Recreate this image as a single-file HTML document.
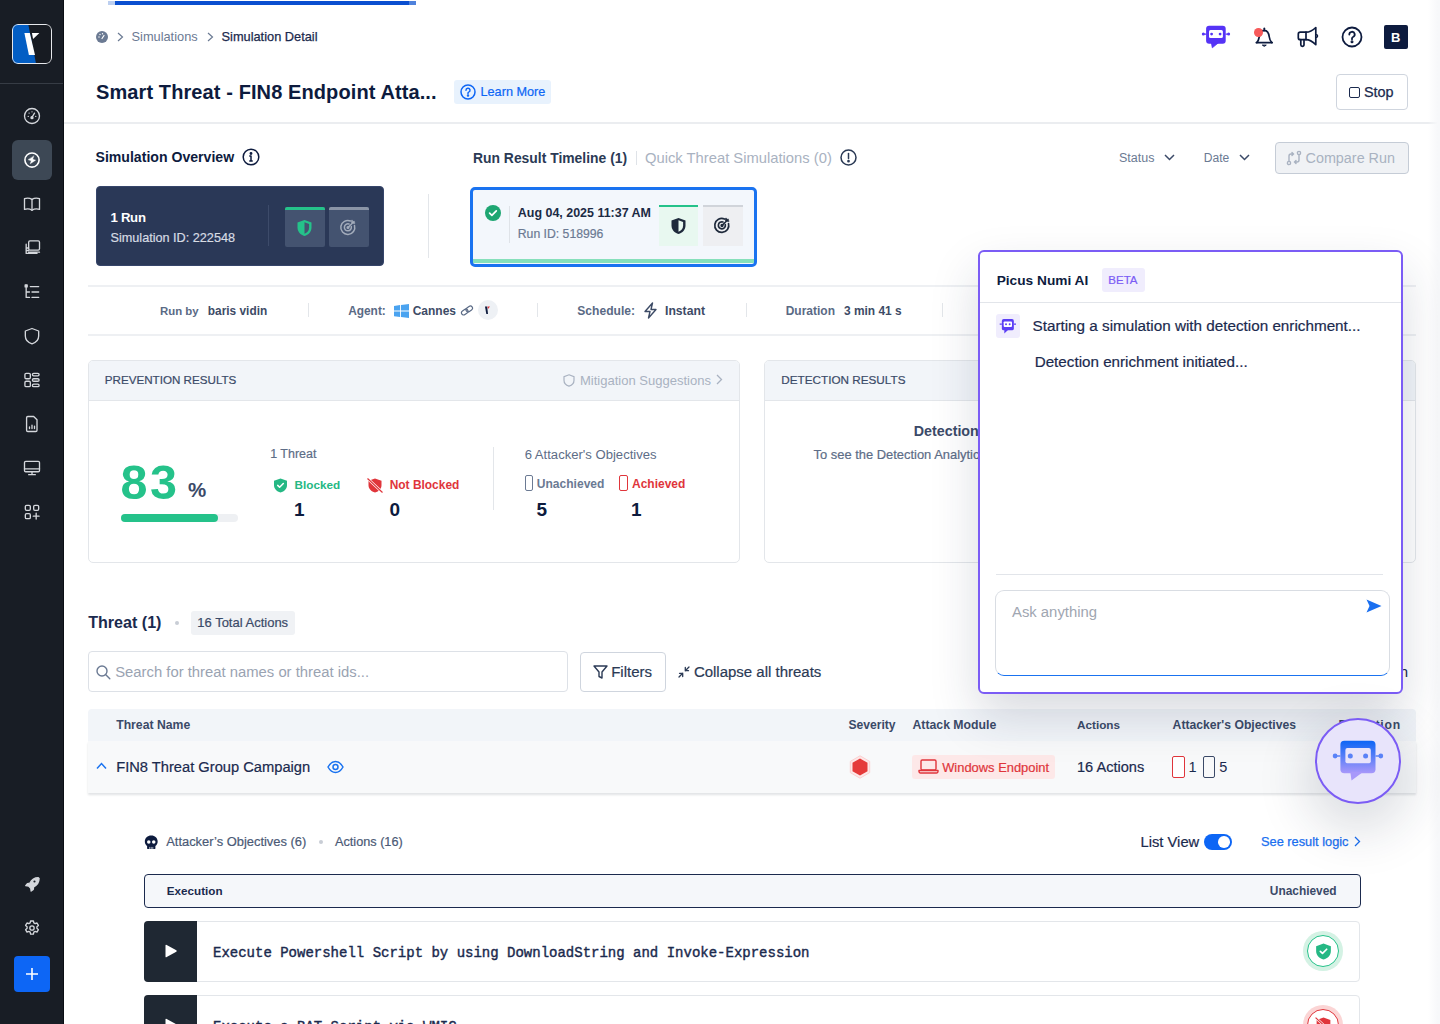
<!DOCTYPE html>
<html><head><meta charset="utf-8">
<style>
*{box-sizing:border-box;margin:0;padding:0}
html,body{width:1440px;height:1024px;overflow:hidden;background:#fff;font-family:"Liberation Sans",sans-serif;color:#1b2a44}
.a{position:absolute}
.t{position:absolute;white-space:nowrap;line-height:1}
.sbi{position:absolute;left:12px;width:40px;height:40px;border-radius:6px;display:flex;align-items:center;justify-content:center}
.sbi svg{width:20px;height:20px;fill:none;stroke:#d4d7dc;stroke-width:1.6;stroke-linecap:round;stroke-linejoin:round}
</style></head><body>
<div class="a" style="left:0;top:0;width:64px;height:1024px;background:#181d25"></div>
<div class="a" style="left:12px;top:24px;width:40px;height:40px;border-radius:6px;overflow:hidden;background:#171b22">
<svg width="40" height="40" viewBox="0 0 40 40" style="position:absolute;left:0;top:0">
<polygon points="0,0 16.2,0 24.1,40 0,40" fill="#035ec4"/>
<polygon points="12.4,9.1 17.8,9.1 23,31 16.9,31" fill="#fff"/>
<polygon points="19.9,9.1 27.4,9.1 21.1,15" fill="#fff"/>
</svg><div class="a" style="left:0;top:0;width:40px;height:40px;border:1.5px solid #e6e8ec;border-radius:6px"></div></div>
<div class="a" style="left:0px;top:83px;width:64px;height:1px;background:#363c45"></div>
<div class="a" style="left:63px;top:0px;width:1px;height:1024px;background:#0a0e14"></div>
<div class="sbi" style="top:96px"><svg viewBox="0 0 24 24"><circle cx="12" cy="12" r="9"/><path d="M12 13.5l3-5"/><circle cx="12" cy="14" r="1.2" fill="#d4d7dc"/><path d="M7.5 12.5h.01M8.5 8.5h.01M12 7h.01M16.5 12.5h.01"/></svg></div>
<div class="sbi" style="top:184px"><svg viewBox="0 0 24 24"><path d="M3 5.5c3-1 6-1 9 1 3-2 6-2 9-1v13c-3-1-6-1-9 1-3-2-6-2-9-1z"/><path d="M12 6.5v13"/></svg></div>
<div class="sbi" style="top:228px"><svg viewBox="0 0 24 24"><rect x="8" y="3.5" width="13" height="11" rx="1.5"/><path d="M5 7.5v11h13M5 12h3M5 15h3M8 17h13"/></svg></div>
<div class="sbi" style="top:272px"><svg viewBox="0 0 24 24"><path d="M10 5.5h10M12 12h8M12 18.5h8"/><path d="M5 4v14.5M5 12h4M5 18.5h4"/><rect x="3.8" y="3.5" width="2.4" height="2.4" fill="#d4d7dc"/></svg></div>
<div class="sbi" style="top:316px"><svg viewBox="0 0 24 24"><path d="M12 3l8 3v6c0 5-3.5 8-8 9.5C7.5 20 4 17 4 12V6z"/></svg></div>
<div class="sbi" style="top:360px"><svg viewBox="0 0 24 24"><rect x="3.5" y="4" width="6.5" height="6.5" rx="1.5"/><rect x="3.5" y="13.5" width="6.5" height="6.5" rx="1.5"/><rect x="12.5" y="4" width="8" height="3" rx="1.5"/><rect x="12.5" y="10.5" width="8" height="3" rx="1.5"/><rect x="12.5" y="17" width="8" height="3" rx="1.5"/></svg></div>
<div class="sbi" style="top:404px"><svg viewBox="0 0 24 24"><path d="M7 3h7l4 4v12.5a1.5 1.5 0 0 1-1.5 1.5h-9.5A1.5 1.5 0 0 1 5.5 19.5V4.5A1.5 1.5 0 0 1 7 3z"/><path d="M9 17.5v-2M12 17.5v-4M15 17.5v-3"/></svg></div>
<div class="sbi" style="top:448px"><svg viewBox="0 0 24 24"><rect x="3" y="4" width="18" height="12.5" rx="1.5"/><path d="M3 13h18M12 16.5v3.5M8 20h8"/></svg></div>
<div class="sbi" style="top:492px"><svg viewBox="0 0 24 24"><rect x="4" y="4" width="6" height="6" rx="1.5"/><rect x="14" y="4" width="6" height="6" rx="1.5"/><rect x="4" y="14" width="6" height="6" rx="1.5"/><path d="M17 13.5v7M13.5 17h7"/></svg></div>
<div class="sbi" style="top:908px"><svg viewBox="0 0 24 24"><path d="M10.3 3.6h3.4l.5 2.3 1.6.9 2.2-.8 1.7 2.9-1.8 1.6v1.9l1.8 1.6-1.7 2.9-2.2-.8-1.6.9-.5 2.3h-3.4l-.5-2.3-1.6-.9-2.2.8-1.7-2.9 1.8-1.6v-1.9L4.3 8.9 6 6l2.2.8 1.6-.9z"/><circle cx="12" cy="12" r="2.6"/></svg></div>
<div class="sbi" style="top:140px;background:#3d4855"><svg viewBox="0 0 24 24" style="stroke:#fff;stroke-width:1.9"><circle cx="12" cy="12" r="8.5"/><path d="M14.13 7.39 L12.92 11.12 L16.34 12.23 L9.87 16.61 L11.08 12.88 L7.66 11.77Z" fill="#fff" stroke-width=".5"/></svg></div>
<div class="sbi" style="top:864px"><svg viewBox="0 0 24 24" style="fill:#d4d7dc;stroke:#d4d7dc"><path d="M19.5 4.5c-4.5 0-8 2.5-10 6.5l-3 .5-2 2.5 3.5.5 2.5 2.5.5 3.5 2.5-2 .5-3c4-2 6.5-5.5 6.5-10z"/><circle cx="15" cy="9" r="1.3" fill="#181d25" stroke="none"/></svg></div>
<div class="a" style="left:14px;top:956px;width:36px;height:36px;border-radius:4px;background:#0d66f5;display:flex;align-items:center;justify-content:center"><svg width="14" height="14" viewBox="0 0 14 14"><path d="M7 1v12M1 7h12" stroke="#fff" stroke-width="1.6"/></svg></div>
<div class="a" style="left:108px;top:1px;width:308px;height:4px;background:#0a4fd0"></div>
<div class="a" style="left:108px;top:1px;width:7px;height:4px;background:#bccff0"></div>
<div class="a" style="left:409px;top:1px;width:7px;height:4px;background:#4f82dc"></div>
<svg class="a" style="left:96px;top:31px" width="12" height="12" viewBox="0 0 12 12"><circle cx="6" cy="6" r="6" fill="#6b7a93"/><path d="M6 7.5l2-3" stroke="#fff" stroke-width="1.2" stroke-linecap="round"/><circle cx="3" cy="6" r=".7" fill="#fff"/><circle cx="4" cy="3.5" r=".7" fill="#fff"/><circle cx="6.5" cy="2.7" r=".7" fill="#fff"/></svg>
<svg class="a" style="left:117px;top:32px" width="7" height="10" viewBox="0 0 7 10"><path d="M1 1l4.5 4-4.5 4" fill="none" stroke="#6b7a93" stroke-width="1.2"/></svg>
<div class="t" style="left:131.5px;top:31.0px;font-size:12.8px;color:#6b7a93;font-weight:400;font-family:'Liberation Sans',sans-serif;">Simulations</div>
<svg class="a" style="left:207px;top:32px" width="7" height="10" viewBox="0 0 7 10"><path d="M1 1l4.5 4-4.5 4" fill="none" stroke="#6b7a93" stroke-width="1.2"/></svg>
<div class="t" style="left:221.5px;top:31.0px;font-size:12.8px;color:#1b2a4e;font-weight:400;font-family:'Liberation Sans',sans-serif;-webkit-text-stroke:0.25px #1b2a4e;">Simulation Detail</div>
<svg class="a" style="left:1200px;top:24px" width="32" height="26" viewBox="0 0 32 26">
<rect x="6.1" y="1.8" width="19.6" height="18" rx="3" fill="#5533f6"/>
<path d="M11.4 19l.9 4.8 5.9-4.8z" fill="#5533f6" stroke="#5533f6" stroke-width=".8" stroke-linejoin="round"/>
<rect x="9" y="6" width="13.9" height="8.1" rx="1.5" fill="#fff"/>
<circle cx="11.6" cy="10.1" r="1.4" fill="#5533f6"/><circle cx="20.1" cy="10.1" r="1.4" fill="#5533f6"/>
<path d="M3.3 10.1H6.5M25.5 10.1H28.6" stroke="#5533f6" stroke-width="1.4"/>
<circle cx="3.3" cy="10.1" r="1.5" fill="#5533f6"/><circle cx="28.6" cy="10.1" r="1.5" fill="#5533f6"/>
</svg>
<svg class="a" style="left:1253px;top:26px" width="22" height="22" viewBox="0 0 22 22" fill="none" stroke="#0d1b3e" stroke-width="1.7" stroke-linejoin="round" stroke-linecap="round">
<path d="M3.3 16.6H19.2"/><path d="M3.8 16.6C5.2 15 5.8 13.5 6.2 11 6.8 6.8 8.5 4.6 11.3 4.4 14.1 4.6 15.8 6.8 16.3 11 16.6 13.5 17.3 15 18.8 16.6"/><path d="M11.3 4.4V2.3"/>
<path d="M9.6 19.4Q11.3 21.2 13 19.4z" fill="#0d1b3e" stroke-width="1"/>
</svg>
<div class="a" style="left:1254.2px;top:28.1px;width:8.8px;height:8.8px;background:#f75a5a;border-radius:50%"></div>
<svg class="a" style="left:1297px;top:26px" width="22" height="22" viewBox="0 0 22 22" fill="none" stroke="#0d1b3e" stroke-width="1.7" stroke-linejoin="round" stroke-linecap="round">
<path d="M9 6.2H3.3a2 2 0 0 0-2 2v3.5a2 2 0 0 0 2 2H9C13 13.7 15.5 15.5 18.8 18.7V1.5C15.5 4.7 13 6.2 9 6.2z"/><path d="M9 6.2v7.5"/><path d="M3.8 13.7v5a1.6 1.6 0 0 0 3.2 0v-5"/><path d="M19.6 8.6a1.5 1.5 0 0 1 0 2.8" stroke-width="1.4"/>
</svg>
<svg class="a" style="left:1341px;top:26px" width="22" height="22" viewBox="0 0 22 22" fill="none" stroke="#0d1b3e" stroke-width="1.8">
<circle cx="11" cy="11" r="9.5"/><path d="M8.3 8.5a2.7 2.7 0 1 1 3.7 2.5c-.7.3-1 .8-1 1.5v.8" stroke-linecap="round"/><circle cx="11" cy="15.8" r=".6" fill="#0d1b3e"/>
</svg>
<div class="a" style="left:1384px;top:25px;width:24px;height:24px;background:#0d1b3e;border-radius:2px"></div>
<div class="t" style="left:1391.0px;top:31.0px;font-size:13px;color:#fff;font-weight:700;font-family:'Liberation Sans',sans-serif;">B</div>
<div class="t" style="left:96.0px;top:82.0px;font-size:20px;color:#0d1b3e;font-weight:700;font-family:'Liberation Sans',sans-serif;letter-spacing:0.1px;">Smart Threat - FIN8 Endpoint Atta...</div>
<div class="a" style="left:454px;top:80px;width:97px;height:24px;background:#e8f2fd;border-radius:3px"></div>
<svg class="a" style="left:460px;top:84px" width="16" height="16" viewBox="0 0 16 16" fill="none" stroke="#0d66f5" stroke-width="1.5"><circle cx="8" cy="8" r="7"/><path d="M6 6.2a2 2 0 1 1 2.7 1.9c-.5.2-.7.5-.7 1v.5" stroke-linecap="round"/><circle cx="8" cy="11.6" r=".5" fill="#0d66f5"/></svg>
<div class="t" style="left:480.5px;top:86.0px;font-size:12.7px;color:#0d66f5;font-weight:400;font-family:'Liberation Sans',sans-serif;-webkit-text-stroke:0.2px #0d66f5;">Learn More</div>
<div class="a" style="left:1336px;top:74px;width:72px;height:36px;border:1px solid #cfd5de;border-radius:4px;background:#fff"></div>
<div class="a" style="left:1349px;top:87px;width:11px;height:11px;border:1.4px solid #1b2a4e;border-radius:2px"></div>
<div class="t" style="left:1364.0px;top:85.0px;font-size:14.4px;color:#1b2a4e;font-weight:400;font-family:'Liberation Sans',sans-serif;-webkit-text-stroke:0.25px #1b2a4e;">Stop</div>
<div class="a" style="left:64px;top:122px;width:1376px;height:2px;background:#ebedf0"></div>
<div class="t" style="left:95.5px;top:150.0px;font-size:14.1px;color:#0d1b3e;font-weight:700;font-family:'Liberation Sans',sans-serif;">Simulation Overview</div>
<svg class="a" style="left:242px;top:148px" width="18" height="18" viewBox="0 0 18 18" fill="none" stroke="#0d1b3e" stroke-width="1.5"><circle cx="9" cy="9" r="7.8"/><path d="M9 8v5M7.8 13h2.4M7.8 8H9" stroke-linecap="round"/><circle cx="9" cy="5.5" r=".7" fill="#0d1b3e"/></svg>
<div class="a" style="left:95.5px;top:185.5px;width:288.5px;height:80px;background:#2a3857;border:1px solid #36456a;border-radius:4px"></div>
<div class="t" style="left:110.5px;top:211.0px;font-size:13.2px;color:#fff;font-weight:700;font-family:'Liberation Sans',sans-serif;letter-spacing:-0.3px;">1 Run</div>
<div class="t" style="left:110.5px;top:232.0px;font-size:12.66px;color:#d7dce4;font-weight:400;font-family:'Liberation Sans',sans-serif;-webkit-text-stroke:0.2px #d7dce4;">Simulation ID: 222548</div>
<div class="a" style="left:268px;top:204.5px;width:1px;height:41.5px;background:#3d4b6a"></div>
<div class="a" style="left:284.5px;top:207px;width:40px;height:40px;background:#445370;border-radius:2px"></div>
<div class="a" style="left:284.5px;top:207px;width:40px;height:3px;background:#25c28a;border-radius:2px 2px 0 0"></div>
<svg class="a" style="left:296px;top:219px" width="17" height="18" viewBox="0 0 17 18"><path d="M8.5 1l7 2.6v5c0 4.5-3 7.3-7 8.4-4-1.1-7-3.9-7-8.4v-5z" fill="#25c28a"/><path d="M8.5 1v16" stroke="#445370" stroke-width="0"/><path d="M8.5 3.2l0 11.6c2.6-1 4.6-3.1 4.6-6.3V5z" fill="#445370"/></svg>
<div class="a" style="left:329px;top:207px;width:40px;height:40px;background:#445370;border-radius:2px"></div>
<div class="a" style="left:329px;top:207px;width:40px;height:3px;background:#8a94a6;border-radius:2px 2px 0 0"></div>
<svg class="a" style="left:339px;top:218px" width="19" height="19" viewBox="0 0 19 19" fill="none" stroke="#a3acbb" stroke-width="1.5" stroke-linecap="round"><path d="M15.5 7.5A7 7 0 1 1 11.5 3"/><path d="M12.3 8.6A3.5 3.5 0 1 1 10 6"/><circle cx="9" cy="9.5" r=".8" fill="#a3acbb"/><path d="M9 9.5l6-6M13 2.5v2.5h2.5"/></svg>
<div class="a" style="left:428px;top:193.5px;width:1px;height:64.5px;background:#e3e6ea"></div>
<div class="t" style="left:473.0px;top:152.0px;font-size:13.9px;color:#2b3a55;font-weight:700;font-family:'Liberation Sans',sans-serif;">Run Result Timeline (1)</div>
<div class="a" style="left:635.5px;top:151px;width:1px;height:14px;background:#dfe3e8"></div>
<div class="t" style="left:645.0px;top:151.0px;font-size:14.78px;color:#a9b2c1;font-weight:400;font-family:'Liberation Sans',sans-serif;">Quick Threat Simulations (0)</div>
<svg class="a" style="left:840px;top:149px" width="17" height="17" viewBox="0 0 17 17" fill="none" stroke="#2b3a55" stroke-width="1.5"><circle cx="8.5" cy="8.5" r="7.5"/><path d="M8.5 4.5v5" stroke-linecap="round"/><circle cx="8.5" cy="12.2" r=".6" fill="#2b3a55"/></svg>
<div class="a" style="left:469.5px;top:187px;width:287.5px;height:79.5px;background:#f3f7fc;border:3px solid #1a73f0;border-radius:5px;overflow:hidden"></div>
<div class="a" style="left:472.5px;top:258.8px;width:281.5px;height:4.7px;background:#86e0bb"></div>
<svg class="a" style="left:484.5px;top:205.4px" width="16" height="16" viewBox="0 0 16 16"><circle cx="8" cy="8" r="8" fill="#1ea672"/><path d="M4.6 8.2l2.3 2.2 4.4-4.6" fill="none" stroke="#fff" stroke-width="1.7" stroke-linecap="round" stroke-linejoin="round"/></svg>
<div class="a" style="left:508.5px;top:205.5px;width:1px;height:37.5px;background:#dfe3e8"></div>
<div class="t" style="left:517.8px;top:207.0px;font-size:12.46px;color:#1b2a44;font-weight:700;font-family:'Liberation Sans',sans-serif;">Aug 04, 2025 11:37 AM</div>
<div class="t" style="left:517.8px;top:228.0px;font-size:12.22px;color:#6b7a93;font-weight:400;font-family:'Liberation Sans',sans-serif;-webkit-text-stroke:0.2px #6b7a93;">Run ID: 518996</div>
<div class="a" style="left:658.5px;top:205px;width:39.5px;height:40.5px;background:#e8f8f0"></div>
<div class="a" style="left:658.5px;top:205px;width:39.5px;height:2px;background:#25c28a"></div>
<svg class="a" style="left:669.5px;top:217px" width="17" height="18" viewBox="0 0 17 18"><path d="M8.5 1l7 2.6v5c0 4.5-3 7.3-7 8.4-4-1.1-7-3.9-7-8.4v-5z" fill="#1f2a3c"/><path d="M8.5 3.2l0 11.6c2.6-1 4.6-3.1 4.6-6.3V5z" fill="#e8f8f0"/></svg>
<div class="a" style="left:703px;top:205px;width:39.5px;height:40.5px;background:#eeeff2"></div>
<div class="a" style="left:703px;top:205px;width:39.5px;height:2px;background:#d0d4da"></div>
<svg class="a" style="left:712.5px;top:216px" width="19" height="19" viewBox="0 0 19 19" fill="none" stroke="#1f2a3c" stroke-width="1.7" stroke-linecap="round"><path d="M15.5 7.5A7 7 0 1 1 11.5 3"/><path d="M12.3 8.6A3.5 3.5 0 1 1 10 6"/><circle cx="9" cy="9.5" r=".8" fill="#1f2a3c"/><path d="M9 9.5l6-6M13 2.5v2.5h2.5"/></svg>
<div class="t" style="left:1119.0px;top:152.0px;font-size:12.5px;color:#6b7a93;font-weight:400;font-family:'Liberation Sans',sans-serif;">Status</div>
<svg class="a" style="left:1164px;top:154px" width="11" height="7" viewBox="0 0 11 7"><path d="M1 1l4.5 4.5L10 1" fill="none" stroke="#3b4a68" stroke-width="1.5"/></svg>
<div class="t" style="left:1203.8px;top:152.0px;font-size:12.07px;color:#6b7a93;font-weight:400;font-family:'Liberation Sans',sans-serif;">Date</div>
<svg class="a" style="left:1239px;top:154px" width="11" height="7" viewBox="0 0 11 7"><path d="M1 1l4.5 4.5L10 1" fill="none" stroke="#3b4a68" stroke-width="1.5"/></svg>
<div class="a" style="left:1274.5px;top:142px;width:134px;height:31.5px;background:#f0f2f5;border:1px solid #c5ccd6;border-radius:4px"></div>
<svg class="a" style="left:1286px;top:150px" width="16" height="16" viewBox="0 0 16 16" fill="none" stroke="#a9b2c1" stroke-width="1.4" stroke-linecap="round"><circle cx="3" cy="13" r="1.6"/><circle cx="13" cy="3" r="1.6"/><path d="M3 11.4V6a2 2 0 0 1 2-2h2.5M6 2.5L7.5 4 6 5.5M13 4.6V10a2 2 0 0 1-2 2H8.5M10 10.5L8.5 12l1.5 1.5"/></svg>
<div class="t" style="left:1305.5px;top:151.0px;font-size:14.38px;color:#a9b2c1;font-weight:400;font-family:'Liberation Sans',sans-serif;">Compare Run</div>
<div class="a" style="left:88px;top:285px;width:1328px;height:2px;background:#eef0f3"></div>
<div class="a" style="left:88px;top:334px;width:1328px;height:2px;background:#eef0f3"></div>
<div class="t" style="left:160.0px;top:306.0px;font-size:11.4px;color:#5a6a85;font-weight:700;font-family:'Liberation Sans',sans-serif;">Run by</div>
<div class="t" style="left:207.8px;top:306.0px;font-size:11.88px;color:#3d4b66;font-weight:700;font-family:'Liberation Sans',sans-serif;">baris vidin</div>
<div class="a" style="left:307.5px;top:303px;width:1px;height:14px;background:#e3e6ea"></div>
<div class="t" style="left:348.2px;top:306.0px;font-size:11.88px;color:#5a6a85;font-weight:700;font-family:'Liberation Sans',sans-serif;">Agent:</div>
<svg class="a" style="left:394px;top:303.5px" width="15" height="14" viewBox="0 0 15 14" fill="#4aa3f0"><path d="M0 1.9L6.1 1v5.6H0zM7 .9L15 0v6.6H7zM0 7.5h6.1V13L0 12.2zM7 7.5h8V14l-8-1.1z"/></svg>
<div class="t" style="left:412.7px;top:305.0px;font-size:11.99px;color:#3d4b66;font-weight:700;font-family:'Liberation Sans',sans-serif;">Cannes</div>
<svg class="a" style="left:460px;top:304px" width="14" height="13" viewBox="0 0 14 13" fill="none" stroke="#5a6a85" stroke-width="1.2"><g transform="rotate(-35 7 6.5)"><rect x="0.8" y="4.3" width="7" height="4.4" rx="2.2"/><rect x="6.2" y="4.3" width="7" height="4.4" rx="2.2"/></g></svg>
<div class="a" style="left:477.5px;top:300px;width:20px;height:20px;background:#eef1f5;border-radius:50%"></div>
<svg class="a" style="left:482px;top:305px" width="10" height="10" viewBox="0 0 10 10"><path d="M3 1.5h2.2l.8 7.5H4.3z" fill="#0d1b3e"/><path d="M5.5 1.5h2.5l-2 2.5z" fill="#e0353b"/></svg>
<div class="a" style="left:536.5px;top:303px;width:1px;height:14px;background:#e3e6ea"></div>
<div class="t" style="left:577.3px;top:305.0px;font-size:12.08px;color:#5a6a85;font-weight:700;font-family:'Liberation Sans',sans-serif;">Schedule:</div>
<svg class="a" style="left:643px;top:302px" width="15" height="17" viewBox="0 0 15 17" fill="none" stroke="#3d4b66" stroke-width="1.4" stroke-linejoin="round"><path d="M9.5 1L2 9.5h5L5.5 16 13 7.5H8z"/></svg>
<div class="t" style="left:665.0px;top:305.0px;font-size:12.2px;color:#3d4b66;font-weight:700;font-family:'Liberation Sans',sans-serif;">Instant</div>
<div class="a" style="left:745.5px;top:303px;width:1px;height:14px;background:#e3e6ea"></div>
<div class="t" style="left:785.7px;top:305.0px;font-size:11.99px;color:#5a6a85;font-weight:700;font-family:'Liberation Sans',sans-serif;">Duration</div>
<div class="t" style="left:844.0px;top:306.0px;font-size:11.93px;color:#3d4b66;font-weight:700;font-family:'Liberation Sans',sans-serif;">3 min 41 s</div>
<div class="a" style="left:942px;top:303px;width:1px;height:14px;background:#e3e6ea"></div>
<div class="a" style="left:88px;top:359.5px;width:652px;height:203px;background:#fff;border:1px solid #e3e6ea;border-radius:5px;overflow:hidden"></div>
<div class="a" style="left:89px;top:360.5px;width:650px;height:40.5px;background:#f2f5f9;border-bottom:1px solid #e3e6ea;border-radius:4px 4px 0 0"></div>
<div class="t" style="left:104.8px;top:374.0px;font-size:11.64px;color:#3b4a68;font-weight:400;font-family:'Liberation Sans',sans-serif;-webkit-text-stroke:0.2px #3b4a68;">PREVENTION RESULTS</div>
<svg class="a" style="left:563px;top:374px" width="12" height="13" viewBox="0 0 12 13" fill="none" stroke="#a9b2c1" stroke-width="1.2"><path d="M6 .8l5 1.9v3.6c0 3.1-2.1 5.1-5 5.9-2.9-.8-5-2.8-5-5.9V2.7z"/></svg>
<div class="t" style="left:579.9px;top:374.0px;font-size:13.04px;color:#a9b2c1;font-weight:400;font-family:'Liberation Sans',sans-serif;">Mitigation Suggestions</div>
<svg class="a" style="left:716px;top:374px" width="7" height="11" viewBox="0 0 7 11"><path d="M1 1l4.5 4.5L1 10" fill="none" stroke="#a9b2c1" stroke-width="1.3"/></svg>
<div class="t" style="left:120.5px;top:458.0px;font-size:48.5px;color:#25c28a;font-weight:700;font-family:'Liberation Sans',sans-serif;letter-spacing:2.5px;">83</div>
<div class="t" style="left:188.0px;top:480.0px;font-size:20.5px;color:#3b4a68;font-weight:700;font-family:'Liberation Sans',sans-serif;">%</div>
<div class="a" style="left:120.5px;top:514px;width:117px;height:8px;background:#eef0f3;border-radius:4px"></div>
<div class="a" style="left:120.5px;top:514px;width:97.5px;height:8px;background:#25c28a;border-radius:4px"></div>
<div class="t" style="left:270.2px;top:448.0px;font-size:12.47px;color:#5d6d87;font-weight:400;font-family:'Liberation Sans',sans-serif;-webkit-text-stroke:0.2px #5d6d87;">1 Threat</div>
<svg class="a" style="left:272.5px;top:478px" width="15" height="15" viewBox="0 0 15 15"><path d="M7.5.5l6.5 2.3v4.3c0 4-2.7 6.4-6.5 7.4C3.7 13.5 1 11.1 1 7.1V2.8z" fill="#25b884"/><path d="M4.7 7.4l1.9 1.8 3.7-3.7" fill="none" stroke="#fff" stroke-width="1.5" stroke-linecap="round" stroke-linejoin="round"/></svg>
<div class="t" style="left:294.5px;top:479.0px;font-size:11.72px;color:#25b884;font-weight:700;font-family:'Liberation Sans',sans-serif;">Blocked</div>
<div class="t" style="left:294.0px;top:500.0px;font-size:19px;color:#0d1b3e;font-weight:700;font-family:'Liberation Sans',sans-serif;">1</div>
<svg class="a" style="left:366px;top:477px" width="18" height="17" viewBox="0 0 18 17"><path d="M9 1.5l6.5 2.3v4.3c0 4-2.7 6.4-6.5 7.4-3.8-1-6.5-3.4-6.5-7.4V3.8z" fill="#e0353b"/><path d="M1.5 1.5l15 14" stroke="#fff" stroke-width="2.4"/><path d="M1.5 1.5l15 14" stroke="#e0353b" stroke-width="1.2"/></svg>
<div class="t" style="left:389.7px;top:480.0px;font-size:11.95px;color:#e0353b;font-weight:700;font-family:'Liberation Sans',sans-serif;">Not Blocked</div>
<div class="t" style="left:389.5px;top:500.0px;font-size:19px;color:#0d1b3e;font-weight:700;font-family:'Liberation Sans',sans-serif;">0</div>
<div class="a" style="left:492.5px;top:447px;width:1px;height:63px;background:#e3e6ea"></div>
<div class="t" style="left:524.7px;top:448.0px;font-size:13.09px;color:#5d6d87;font-weight:400;font-family:'Liberation Sans',sans-serif;">6 Attacker's Objectives</div>
<div class="a" style="left:524.5px;top:474.7px;width:8px;height:16px;border:1.3px solid #6b7a93;border-radius:2px"></div>
<div class="t" style="left:536.8px;top:478.0px;font-size:12.06px;color:#6b7a93;font-weight:700;font-family:'Liberation Sans',sans-serif;">Unachieved</div>
<div class="t" style="left:536.4px;top:500.0px;font-size:19px;color:#0d1b3e;font-weight:700;font-family:'Liberation Sans',sans-serif;">5</div>
<div class="a" style="left:619px;top:474.7px;width:8.5px;height:16px;border:1.3px solid #e0353b;border-radius:2px"></div>
<div class="t" style="left:632.0px;top:478.0px;font-size:11.99px;color:#e0353b;font-weight:700;font-family:'Liberation Sans',sans-serif;">Achieved</div>
<div class="t" style="left:631.0px;top:500.0px;font-size:19px;color:#0d1b3e;font-weight:700;font-family:'Liberation Sans',sans-serif;">1</div>
<div class="a" style="left:764px;top:359.5px;width:652px;height:203px;background:#fff;border:1px solid #e3e6ea;border-radius:5px;overflow:hidden"></div>
<div class="a" style="left:765px;top:360.5px;width:650px;height:40px;background:#f2f5f9;border-bottom:1px solid #e3e6ea;border-radius:4px 4px 0 0"></div>
<div class="t" style="left:781.3px;top:374.0px;font-size:11.72px;color:#3b4a68;font-weight:400;font-family:'Liberation Sans',sans-serif;-webkit-text-stroke:0.2px #3b4a68;">DETECTION RESULTS</div>
<div class="t" style="left:913.8px;top:424.0px;font-size:14.27px;color:#3b4a68;font-weight:700;font-family:'Liberation Sans',sans-serif;">Detection Analytics</div>
<div class="t" style="left:813.5px;top:449.0px;font-size:12.93px;color:#5d6d87;font-weight:400;font-family:'Liberation Sans',sans-serif;-webkit-text-stroke:0.2px #5d6d87;">To see the Detection Analytics, please enable detection</div>
<div class="t" style="left:88.2px;top:614.0px;font-size:16.09px;color:#1b2a4e;font-weight:700;font-family:'Liberation Sans',sans-serif;">Threat (1)</div>
<div class="a" style="left:174.7px;top:620.5px;width:4.6px;height:4.6px;background:#c8cdd5;border-radius:50%"></div>
<div class="a" style="left:191.2px;top:610.8px;width:103.6px;height:24px;background:#f0f2f5;border-radius:3px"></div>
<div class="t" style="left:197.3px;top:616.0px;font-size:13.01px;color:#3b4a68;font-weight:400;font-family:'Liberation Sans',sans-serif;-webkit-text-stroke:0.2px #3b4a68;">16 Total Actions</div>
<div class="a" style="left:88px;top:651.2px;width:479.5px;height:41px;border:1px solid #dde1e7;border-radius:4px;background:#fff"></div>
<svg class="a" style="left:96px;top:665px" width="15" height="15" viewBox="0 0 15 15" fill="none" stroke="#6b7a93" stroke-width="1.4" stroke-linecap="round"><circle cx="6" cy="6" r="5"/><path d="M9.8 9.8l4 4"/></svg>
<div class="t" style="left:115.2px;top:665.0px;font-size:14.84px;color:#9aa3b2;font-weight:400;font-family:'Liberation Sans',sans-serif;">Search for threat names or threat ids...</div>
<div class="a" style="left:580px;top:652px;width:85.5px;height:39.5px;border:1px solid #cfd5de;border-radius:4px;background:#fff"></div>
<svg class="a" style="left:592.5px;top:665px" width="15" height="14" viewBox="0 0 15 14" fill="none" stroke="#2b3a55" stroke-width="1.4" stroke-linejoin="round"><path d="M1 1h13L9 7v6l-3-1.5V7z"/></svg>
<div class="t" style="left:611.2px;top:664.0px;font-size:15.03px;color:#2b3a55;font-weight:400;font-family:'Liberation Sans',sans-serif;-webkit-text-stroke:0.2px #2b3a55;">Filters</div>
<svg class="a" style="left:677.5px;top:666px" width="12" height="12" viewBox="0 0 12 12" fill="none" stroke="#2b3a55" stroke-width="1.3" stroke-linecap="round"><path d="M11 1L7.3 4.7M7.3 1.5v3.2h3.2M1 11l3.7-3.7M1.5 7.3h3.2v3.2"/></svg>
<div class="t" style="left:693.9px;top:664.0px;font-size:14.99px;color:#2b3a55;font-weight:400;font-family:'Liberation Sans',sans-serif;-webkit-text-stroke:0.2px #2b3a55;">Collapse all threats</div>
<div class="t" style="right:32px;top:664.3px;font-size:15px;color:#1b2a4e">Full Width Search</div>
<div class="a" style="left:88px;top:709px;width:1328px;height:31.5px;background:#f2f5f9;border-radius:4px 4px 0 0"></div>
<div class="t" style="left:116.2px;top:719.0px;font-size:12.22px;color:#3b4a68;font-weight:700;font-family:'Liberation Sans',sans-serif;">Threat Name</div>
<div class="t" style="left:848.4px;top:719.0px;font-size:12.13px;color:#3b4a68;font-weight:700;font-family:'Liberation Sans',sans-serif;">Severity</div>
<div class="t" style="left:912.5px;top:719.0px;font-size:12.25px;color:#3b4a68;font-weight:700;font-family:'Liberation Sans',sans-serif;">Attack Module</div>
<div class="t" style="left:1077.0px;top:719.0px;font-size:11.73px;color:#3b4a68;font-weight:700;font-family:'Liberation Sans',sans-serif;">Actions</div>
<div class="t" style="left:1172.6px;top:719.0px;font-size:12.2px;color:#3b4a68;font-weight:700;font-family:'Liberation Sans',sans-serif;">Attacker's Objectives</div>
<div class="t" style="left:1338.6px;top:719.0px;font-size:12.2px;color:#3b4a68;font-weight:700;font-family:'Liberation Sans',sans-serif;letter-spacing:0.75px;">Detection</div>
<div class="a" style="left:88px;top:740.5px;width:1328px;height:52.5px;background:#f8f9fa;box-shadow:0 2px 2px rgba(20,30,50,.12)"></div>
<svg class="a" style="left:96px;top:762px" width="11" height="8" viewBox="0 0 11 8"><path d="M1 6.5l4.5-5 4.5 5" fill="none" stroke="#1a73f0" stroke-width="1.5"/></svg>
<div class="t" style="left:116.2px;top:760.0px;font-size:14.69px;color:#1b2a4e;font-weight:400;font-family:'Liberation Sans',sans-serif;-webkit-text-stroke:0.2px #1b2a4e;">FIN8 Threat Group Campaign</div>
<svg class="a" style="left:326.5px;top:760px" width="17" height="14" viewBox="0 0 17 14" fill="none" stroke="#1a73f0" stroke-width="1.5"><path d="M1 7c2-3.6 4.5-5.5 7.5-5.5S14 3.4 16 7c-2 3.6-4.5 5.5-7.5 5.5S3 10.6 1 7z"/><circle cx="8.5" cy="7" r="2.5"/></svg>
<svg class="a" style="left:849px;top:754.5px" width="22" height="24" viewBox="0 0 22 24"><path d="M11 .8l9.7 5.6v11.2L11 23.2 1.3 17.6V6.4z" fill="#fde8e8" stroke="#fbd0d0" stroke-width="1"/><path d="M11 3.5l7.5 4.3v8.4L11 20.5l-7.5-4.3V7.8z" fill="#e53a3a"/></svg>
<div class="a" style="left:912.2px;top:754.8px;width:143px;height:24px;background:#fde8e8;border-radius:3px"></div>
<svg class="a" style="left:918px;top:759px" width="21" height="15" viewBox="0 0 21 15" fill="none" stroke="#e0353b" stroke-width="1.4" stroke-linejoin="round"><rect x="3" y="1" width="15" height="10" rx="1.2"/><path d="M1 11.5h19v1a1.5 1.5 0 0 1-1.5 1.5h-16A1.5 1.5 0 0 1 1 12.5z"/></svg>
<div class="t" style="left:942.2px;top:762.0px;font-size:12.92px;color:#e0353b;font-weight:400;font-family:'Liberation Sans',sans-serif;-webkit-text-stroke:0.2px #e0353b;">Windows Endpoint</div>
<div class="t" style="left:1077.0px;top:760.0px;font-size:14.59px;color:#1b2a4e;font-weight:400;font-family:'Liberation Sans',sans-serif;-webkit-text-stroke:0.2px #1b2a4e;">16 Actions</div>
<div class="a" style="left:1172px;top:756px;width:12.5px;height:22px;border:1.3px solid #e0353b;border-radius:2px;background:#fff"></div>
<div class="t" style="left:1188.6px;top:760.0px;font-size:14.5px;color:#1b2a4e;font-weight:400;font-family:'Liberation Sans',sans-serif;">1</div>
<div class="a" style="left:1202.5px;top:756px;width:12.5px;height:22px;border:1.3px solid #3b4a68;border-radius:2px"></div>
<div class="t" style="left:1219.2px;top:760.0px;font-size:14.5px;color:#1b2a4e;font-weight:400;font-family:'Liberation Sans',sans-serif;">5</div>
<svg class="a" style="left:143.5px;top:834.5px" width="14.5" height="14.5" viewBox="0 0 14 14"><path d="M7 .5C3.4.5.8 3 .8 6.3c0 1.9.9 3.4 2.2 4.3v2.2c0 .5.4.9.9.9h6.2c.5 0 .9-.4.9-.9v-2.2c1.3-.9 2.2-2.4 2.2-4.3C13.2 3 10.6.5 7 .5z" fill="#0d1b3e"/><circle cx="4.6" cy="6.8" r="1.7" fill="#fff"/><circle cx="9.4" cy="6.8" r="1.7" fill="#fff"/><path d="M5.5 11.5v2.2M7 11.5v2.2M8.5 11.5v2.2" stroke="#fff" stroke-width=".6"/></svg>
<div class="t" style="left:166.2px;top:836.0px;font-size:12.92px;color:#4b5a76;font-weight:400;font-family:'Liberation Sans',sans-serif;-webkit-text-stroke:0.2px #4b5a76;">Attacker’s Objectives (6)</div>
<div class="a" style="left:318.5px;top:839.6px;width:4.6px;height:4.6px;background:#c8cdd5;border-radius:50%"></div>
<div class="t" style="left:335.0px;top:836.0px;font-size:12.69px;color:#4b5a76;font-weight:400;font-family:'Liberation Sans',sans-serif;-webkit-text-stroke:0.2px #4b5a76;">Actions (16)</div>
<div class="t" style="left:1140.5px;top:835.0px;font-size:14.76px;color:#1b2a4e;font-weight:400;font-family:'Liberation Sans',sans-serif;-webkit-text-stroke:0.2px #1b2a4e;">List View</div>
<div class="a" style="left:1204px;top:834px;width:27.5px;height:16px;background:#0d66f5;border-radius:8px"></div>
<div class="a" style="left:1218.2px;top:836.2px;width:11.6px;height:11.6px;background:#fff;border-radius:50%"></div>
<div class="t" style="left:1261.0px;top:836.0px;font-size:12.8px;color:#1a6ff0;font-weight:400;font-family:'Liberation Sans',sans-serif;-webkit-text-stroke:0.25px #1a6ff0;">See result logic</div>
<svg class="a" style="left:1354px;top:836px" width="7" height="11" viewBox="0 0 7 11"><path d="M1 1l4.5 4.5L1 10" fill="none" stroke="#1a6ff0" stroke-width="1.3"/></svg>
<div class="a" style="left:143.7px;top:874.2px;width:1217px;height:33.5px;background:#f5f7fa;border:1.5px solid #1b2a4e;border-radius:4px"></div>
<div class="t" style="left:166.8px;top:885.0px;font-size:11.66px;color:#1b2a4e;font-weight:700;font-family:'Liberation Sans',sans-serif;">Execution</div>
<div class="t" style="left:1269.8px;top:886.0px;font-size:11.92px;color:#3b4a68;font-weight:700;font-family:'Liberation Sans',sans-serif;">Unachieved</div>
<div class="a" style="left:144.3px;top:920.5px;width:1216px;height:61px;background:#fff;border:1px solid #e3e6ea;border-radius:4px"></div>
<div class="a" style="left:144.3px;top:920.5px;width:52.3px;height:61px;background:#1f2833;border-radius:4px 0 0 4px"></div>
<svg class="a" style="left:164px;top:944.0px" width="14" height="14" viewBox="0 0 14 14"><path d="M1.5 1.5Q1.5 .2 2.7 .9L12.3 6.3Q13.3 7 12.3 7.7L2.7 13.1Q1.5 13.8 1.5 12.5z" fill="#fff"/></svg>
<div class="t" style="left:213.0px;top:946.0px;font-size:14px;color:#1b2a4e;font-weight:400;font-family:'Liberation Mono',monospace;-webkit-text-stroke:0.4px #1b2a4e;">Execute Powershell Script by using DownloadString and Invoke-Expression</div>
<div class="a" style="left:1303.3px;top:930.9px;width:39.8px;height:39.8px;background:#d4f2e4;border-radius:50%"></div>
<div class="a" style="left:1307.2px;top:934.8px;width:32px;height:32px;background:#fff;border:1.5px solid #25c28a;border-radius:50%"></div>
<svg class="a" style="left:1314.8px;top:943.0px" width="17" height="17" viewBox="0 0 15 15"><path d="M7.5.5l6.5 2.3v4.3c0 4-2.7 6.4-6.5 7.4C3.7 13.5 1 11.1 1 7.1V2.8z" fill="#25b884"/><path d="M4.7 7.4l1.9 1.8 3.7-3.7" fill="none" stroke="#fff" stroke-width="1.5" stroke-linecap="round" stroke-linejoin="round"/></svg>
<div class="a" style="left:144.3px;top:994.7px;width:1216px;height:61px;background:#fff;border:1px solid #e3e6ea;border-radius:4px"></div>
<div class="a" style="left:144.3px;top:994.7px;width:52.3px;height:61px;background:#1f2833;border-radius:4px 0 0 4px"></div>
<svg class="a" style="left:164px;top:1018.2px" width="14" height="14" viewBox="0 0 14 14"><path d="M1.5 1.5Q1.5 .2 2.7 .9L12.3 6.3Q13.3 7 12.3 7.7L2.7 13.1Q1.5 13.8 1.5 12.5z" fill="#fff"/></svg>
<div class="t" style="left:213.0px;top:1020.0px;font-size:14px;color:#1b2a4e;font-weight:400;font-family:'Liberation Mono',monospace;-webkit-text-stroke:0.4px #1b2a4e;">Execute a BAT Script via WMIC</div>
<div class="a" style="left:1303.3px;top:1005.1px;width:39.8px;height:39.8px;background:#fbd5d5;border-radius:50%"></div>
<div class="a" style="left:1307.2px;top:1009.0px;width:32px;height:32px;background:#fff;border:1.5px solid #e0353b;border-radius:50%"></div>
<svg class="a" style="left:1313.8px;top:1016.2px" width="19" height="18" viewBox="0 0 18 17"><path d="M9 1.5l6.5 2.3v4.3c0 4-2.7 6.4-6.5 7.4-3.8-1-6.5-3.4-6.5-7.4V3.8z" fill="#e0353b"/><path d="M1.5 1.5l15 14" stroke="#fff" stroke-width="2.4"/><path d="M1.5 1.5l15 14" stroke="#e0353b" stroke-width="1.2"/></svg>
<div class="a" style="left:1428px;top:0px;width:12px;height:1024px;background:linear-gradient(90deg,rgba(247,248,250,0),#f7f8fa 80%)"></div>
<div class="a" style="left:978px;top:250px;width:425px;height:443.5px;background:#fff;border:2px solid #7b5cf5;border-radius:6px;box-shadow:0 22px 48px 0 rgba(30,40,70,.17)"></div>
<div class="t" style="left:996.7px;top:274.0px;font-size:13.7px;color:#0d1b3e;font-weight:700;font-family:'Liberation Sans',sans-serif;">Picus Numi AI</div>
<div class="a" style="left:1102px;top:268.2px;width:42.7px;height:23.6px;background:#f0edfd;border-radius:3px"></div>
<div class="t" style="left:1108.3px;top:275.0px;font-size:11.51px;color:#7b5cf5;font-weight:400;font-family:'Liberation Sans',sans-serif;-webkit-text-stroke:0.2px #7b5cf5;">BETA</div>
<div class="a" style="left:980px;top:302px;width:421px;height:1px;background:#e2e5ea"></div>
<div class="a" style="left:996.2px;top:314px;width:24px;height:24px;background:#f0edfd;border-radius:3px"></div>
<svg class="a" style="left:998px;top:318px" width="20" height="16" viewBox="0 0 32 26">
<rect x="6" y="1.7" width="19.5" height="18.3" rx="3" fill="#5b3ef5"/>
<path d="M10 19.5l0 5.5 6-5.5z" fill="#5b3ef5"/>
<rect x="9" y="5.5" width="13.5" height="9" rx="1.5" fill="#fff"/>
<circle cx="12.8" cy="10" r="1.6" fill="#5b3ef5"/><circle cx="18.7" cy="10" r="1.6" fill="#5b3ef5"/>
<path d="M2.5 10H6M25.5 10H29" stroke="#5b3ef5" stroke-width="1.8"/>
</svg>
<div class="t" style="left:1032.5px;top:318.0px;font-size:15.25px;color:#1b2a4e;font-weight:400;font-family:'Liberation Sans',sans-serif;-webkit-text-stroke:0.2px #1b2a4e;">Starting a simulation with detection enrichment...</div>
<div class="t" style="left:1034.7px;top:354.0px;font-size:15.21px;color:#1b2a4e;font-weight:400;font-family:'Liberation Sans',sans-serif;-webkit-text-stroke:0.2px #1b2a4e;">Detection enrichment initiated...</div>
<div class="a" style="left:996px;top:574px;width:387px;height:1px;background:#e2e5ea"></div>
<div class="a" style="left:995.3px;top:590px;width:394.5px;height:86.2px;background:#fff;border:1px solid #d9dde3;border-bottom:1.5px solid #1a73f0;border-radius:9px"></div>
<div class="t" style="left:1012.0px;top:605.0px;font-size:14.85px;color:#a0a6b1;font-weight:400;font-family:'Liberation Sans',sans-serif;">Ask anything</div>
<svg class="a" style="left:1366px;top:598.5px" width="16" height="14" viewBox="0 0 16 14"><path d="M.5.5L15.5 7 .5 13.5 3.5 7z" fill="#1a6ff0"/></svg>
<div class="a" style="left:1315px;top:718px;width:86px;height:86px;border-radius:50%;background:#e8e4fb;border:2px solid #7b5cf5;box-shadow:0 18px 50px 10px rgba(30,40,70,.15)"></div>
<svg class="a" style="left:1330px;top:738px" width="56" height="46" viewBox="0 0 56 46">
<defs><linearGradient id="rg" x1="0" y1="0" x2="0" y2="1"><stop offset="0" stop-color="#0d66f5"/><stop offset="1" stop-color="#a898fa"/></linearGradient></defs>
<rect x="10.4" y="2.8" width="35.1" height="32.4" rx="4" fill="url(#rg)"/>
<path d="M20.3 34l1.2 8.5 11.5-8.5z" fill="#a898fa"/>
<rect x="15.4" y="10" width="25.4" height="15.3" rx="2" fill="#e8e4fb"/>
<circle cx="20.3" cy="18" r="2.5" fill="#5a82f7"/><circle cx="35.6" cy="18" r="2.5" fill="#5a82f7"/>
<path d="M5 18h5.4M45.5 18h5.5" stroke="#5a82f7" stroke-width="1.6"/>
<circle cx="5.1" cy="18" r="2.4" fill="#5a82f7"/><circle cx="50.8" cy="18" r="2.4" fill="#5a82f7"/>
</svg>
</body></html>
